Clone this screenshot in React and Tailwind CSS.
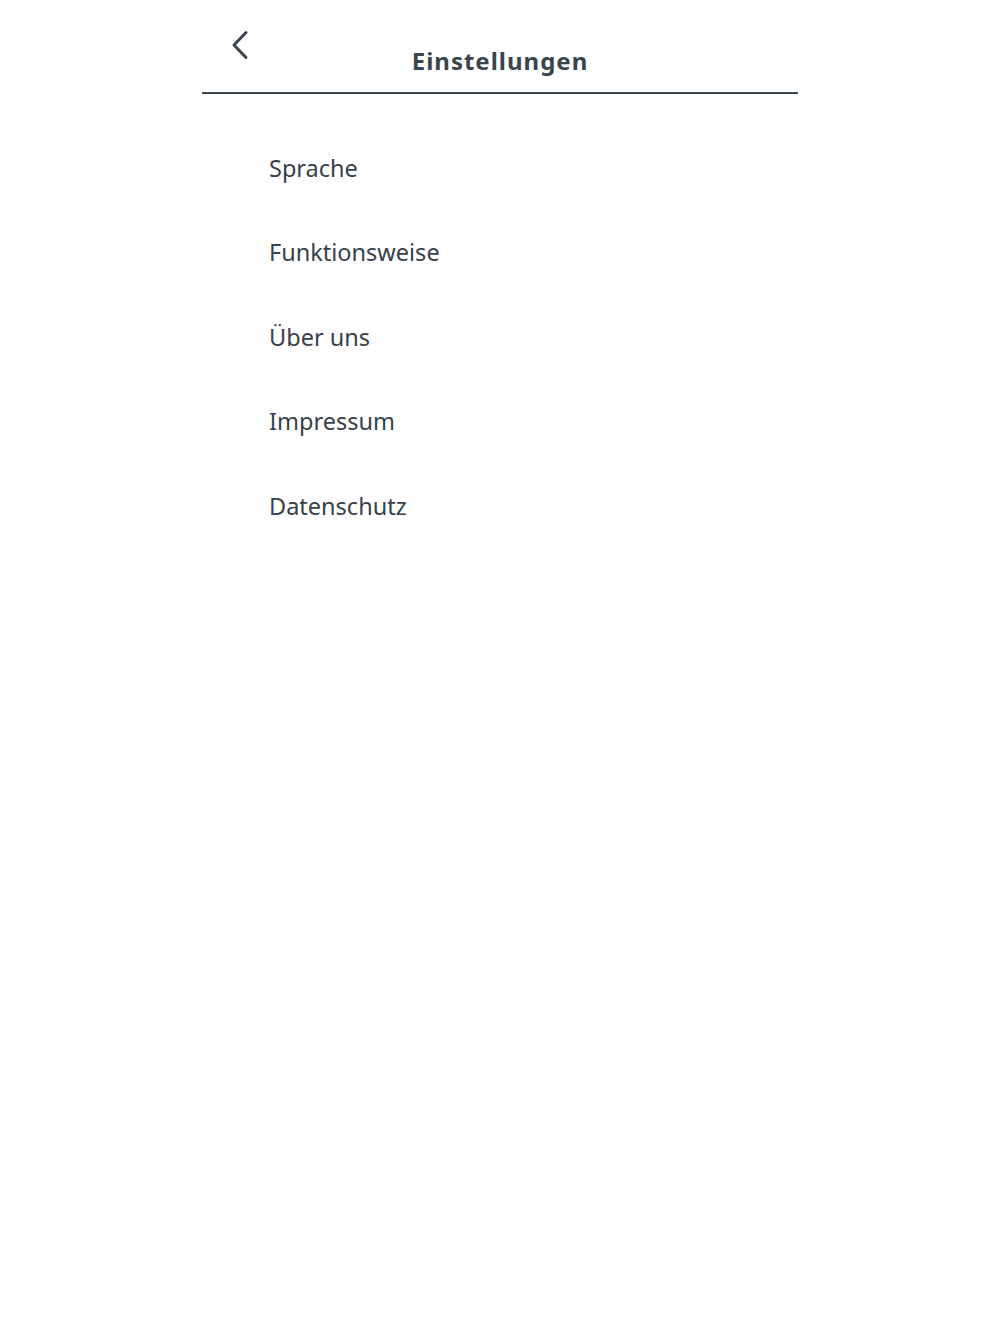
import React from 'react';

const items = ['Sprache', 'Funktionsweise', 'Über uns', 'Impressum', 'Datenschutz'];

const IconBack = () => (
  <svg viewBox="0 0 18 30" fill="none" stroke="currentColor" strokeWidth={3} className="w-[18px] h-[30px]">
    <path strokeLinecap="round" strokeLinejoin="round" d="M15 2.5L3 15l12 12.5"/>
  </svg>
);

export default function App() {
  return (
    <div className="min-h-screen bg-white flex justify-center" style={{ fontFamily: '"Noto Sans", "Open Sans", sans-serif' }}>
      <div className="w-[596px] flex flex-col">
        <div className="relative h-[94px] border-b-2 border-[#3a444d] flex items-center justify-center">
          <button className="absolute left-[29px] top-[30px] text-[#3a444d]">
            <IconBack/>
          </button>
          <h1 className="mt-[30px] text-[24px] font-bold tracking-[1px] text-[#3a444d]">Einstellungen</h1>
        </div>
        <div className="pl-[67px] pt-[32px] flex flex-col">
          {items.map(t => (
            <div key={t} className="h-[84.5px] flex items-center text-[23.5px] text-[#37414a]">{t}</div>
          ))}
        </div>
      </div>
    </div>
  );
}
